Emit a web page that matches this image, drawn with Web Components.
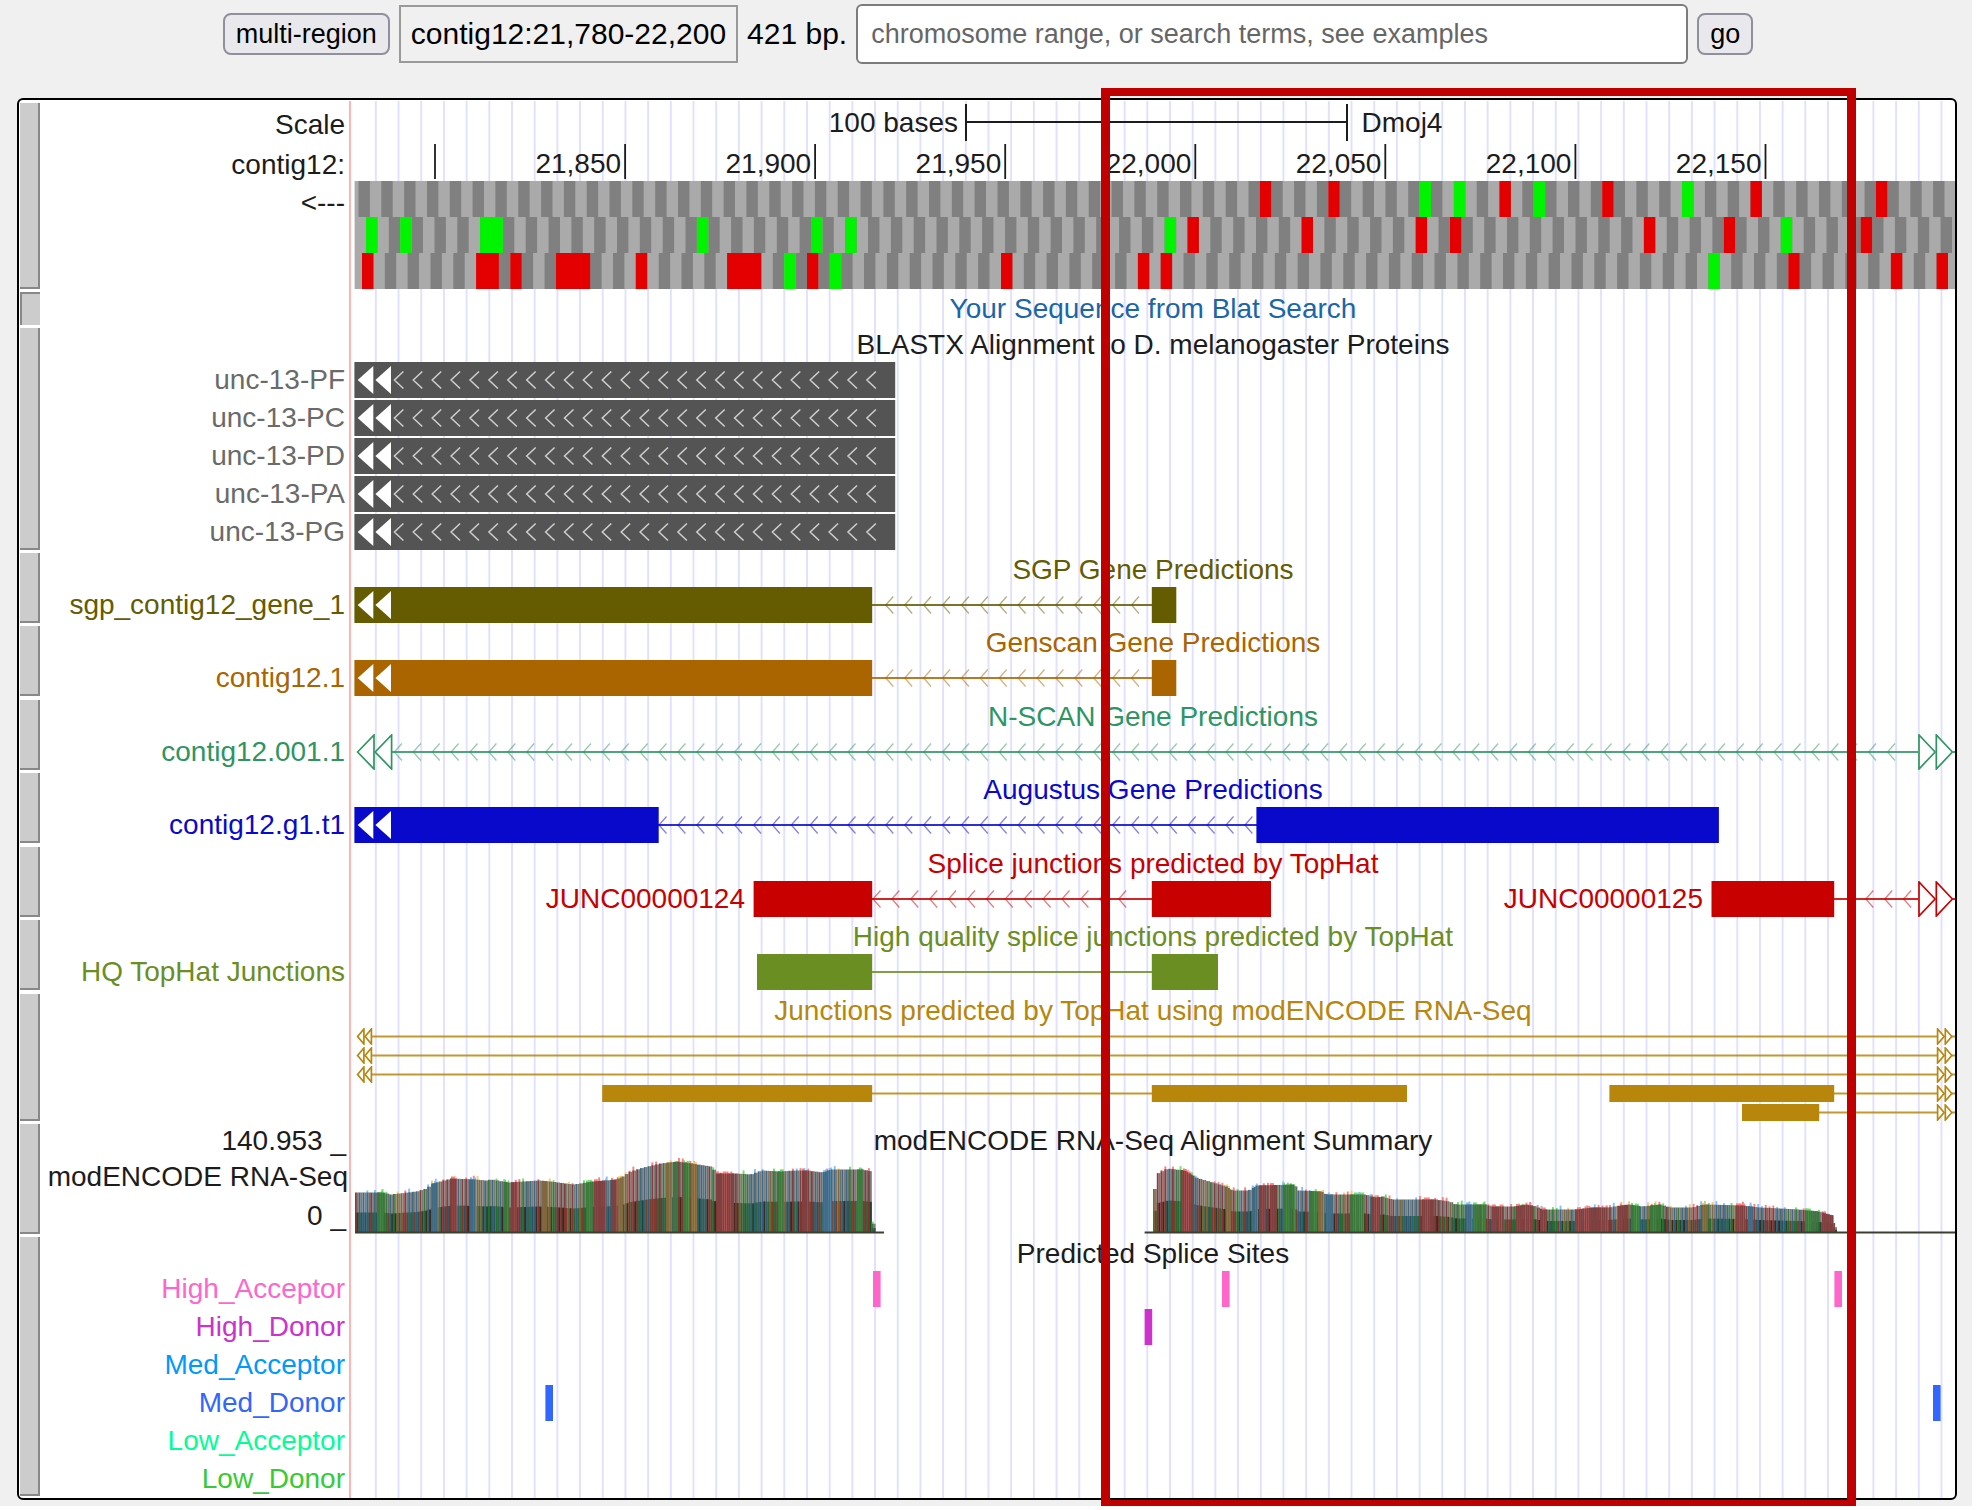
<!DOCTYPE html>
<html lang="en">
<head>
<meta charset="utf-8">
<title>Genome Browser - contig12:21,780-22,200</title>
<style>
  html { background: #fff; }
  body { margin: 0 4px 0 0; background: #f0f0f0; color: #1c1c1c; font-family: "Liberation Sans", Arial, sans-serif; font-size: 28px; display: flow-root; }
</style>
</head>
<body>
<position-bar range="contig12:21,780-22,200" size="421 bp."></position-bar>

<genome-view>
  <genome-track>
    <base-ruler></base-ruler>
  </genome-track>
  <genome-track heading="Your Sequence from Blat Search" style="color:#1a66a8" class="blat" pressed></genome-track>
  <genome-track heading="BLASTX Alignment to D. melanogaster Proteins">
    <track-lane label="unc-13-PF" class="protein" shapes="bar 354.4 895.2; cut 357; vee 394.4 867"></track-lane>
    <track-lane label="unc-13-PC" class="protein" shapes="bar 354.4 895.2; cut 357; vee 394.4 867"></track-lane>
    <track-lane label="unc-13-PD" class="protein" shapes="bar 354.4 895.2; cut 357; vee 394.4 867"></track-lane>
    <track-lane label="unc-13-PA" class="protein" shapes="bar 354.4 895.2; cut 357; vee 394.4 867"></track-lane>
    <track-lane label="unc-13-PG" class="protein" shapes="bar 354.4 895.2; cut 357; vee 394.4 867"></track-lane>
  </genome-track>
  <genome-track heading="SGP Gene Predictions" style="color:#655b00">
    <track-lane label="sgp_contig12_gene_1" shapes="bar 354.4 872.2; cut 357; line 872 1152; chev 885.8 1135; bar 1151.8 1176.3"></track-lane>
  </genome-track>
  <genome-track heading="Genscan Gene Predictions" style="color:#aa6400" class="tall">
    <track-lane label="contig12.1" shapes="bar 354.4 872.2; cut 357; line 872 1152; chev 885.8 1135; bar 1151.8 1176.3"></track-lane>
  </genome-track>
  <genome-track heading="N-SCAN Gene Predictions" style="color:#2e9562">
    <track-lane label="contig12.001.1" shapes="open-left 357; line 392 1918; chev 394.4 1906; open-right 1918.4; line 1953 1955"></track-lane>
  </genome-track>
  <genome-track heading="Augustus Gene Predictions" style="color:#0909cc" class="tall">
    <track-lane label="contig12.g1.t1" shapes="bar 354.4 658.7; cut 357; line 658 1257; chev 659 1246; bar 1256.4 1718.9"></track-lane>
  </genome-track>
  <genome-track heading="Splice junctions predicted by TopHat" style="color:#c80000">
    <track-lane shapes="bar 753.6 872.2; line 872 1152; chev 873 1135; bar 1151.8 1271; bar 1711.5 1834.2; line 1834 1918; chev 1865.8 1905; open-right 1918.4; line 1953 1955">
      <axis-text end="745">JUNC00000124</axis-text>
      <axis-text end="1703">JUNC00000125</axis-text>
    </track-lane>
  </genome-track>
  <genome-track heading="High quality splice junctions predicted by TopHat" style="color:#6b8e23" class="tall">
    <track-lane label="HQ TopHat Junctions" shapes="bar 757 872.2; line 872 1152; bar 1151.8 1218"></track-lane>
  </genome-track>
  <genome-track heading="Junctions predicted by TopHat using modENCODE RNA-Seq" style="color:#b8860b">
    <track-lane dense shapes="open-left 357; line 372 1937; open-right 1937; line 1952 1955"></track-lane>
    <track-lane dense shapes="open-left 357; line 372 1937; open-right 1937; line 1952 1955"></track-lane>
    <track-lane dense shapes="open-left 357; line 372 1937; open-right 1937; line 1952 1955"></track-lane>
    <track-lane dense shapes="bar 602.2 872.2; line 872 1152; bar 1151.8 1407; bar 1609.4 1834.2; line 1834 1937; open-right 1937; line 1952 1955"></track-lane>
    <track-lane dense shapes="bar 1742 1819.2; line 1819 1937; open-right 1937; line 1952 1955"></track-lane>
  </genome-track>
  <genome-track>
    <coverage-plot heading="modENCODE RNA-Seq Alignment Summary" label="modENCODE RNA-Seq" max="140.953" min="0"></coverage-plot>
  </genome-track>
  <genome-track heading="Predicted Splice Sites" class="sites">
    <track-lane label="High_Acceptor" style="color:#ff66cc" shapes="bar 873 880.6; bar 1222 1229.6; bar 1834.4 1842"></track-lane>
    <track-lane label="High_Donor" style="color:#cc33cc" shapes="bar 1144.6 1152.2"></track-lane>
    <track-lane label="Med_Acceptor" style="color:#0099ff"></track-lane>
    <track-lane label="Med_Donor" style="color:#3366ff" shapes="bar 545.4 553; bar 1933 1940.6"></track-lane>
    <track-lane label="Low_Acceptor" style="color:#00ff99"></track-lane>
    <track-lane label="Low_Donor" style="color:#33cc33"></track-lane>
  </genome-track>
</genome-view>

<script>
/* The image axis: data runs from X0 to X0 + SPAN; every drawing shares it. */
const X0 = 351, SPAN = 1604;
const pct = x => ((x - X0) / SPAN * 100).toFixed(3) + '%';
const axisSvg = (height, body) =>
  `<svg viewBox="${X0} 0 ${SPAN} ${height}" height="${height}" preserveAspectRatio="none" aria-hidden="true">${body}</svg>`;

customElements.define('position-bar', class extends HTMLElement {
  connectedCallback() {
    this.attachShadow({ mode: 'open' }).innerHTML = `
      <style>
        :host { display: block; }
        form { display: flex; justify-content: center; align-items: center; gap: 9px; height: 60px; padding: 4px 12px 34px 16px; color: #000; font-size: 30px; }
        button { box-sizing: border-box; height: 42px; padding: 0 11px; border: 2px solid #8f8f9d; border-radius: 8px; background: #e9e9ed; color: #000; font: 27px "Liberation Sans", Arial, sans-serif; }
        output { box-sizing: border-box; height: 58px; padding: 0 10px; border: 2px solid #999; line-height: 54px; white-space: nowrap; }
        .size { white-space: nowrap; }
        input { box-sizing: border-box; flex: 0 1 832px; min-width: 0; height: 60px; padding: 0 13px; border: 2px solid #7c7c7c; border-radius: 6px; background: #fff; font: 27px "Liberation Sans", Arial, sans-serif; }
        input::placeholder { color: #666; opacity: 1; }
      </style>
      <form onsubmit="return false">
        <button type="button">multi-region</button>
        <output>${this.getAttribute('range')}</output>
        <span class="size">${this.getAttribute('size')}</span>
        <input type="text" aria-label="Position or search terms" placeholder="chromosome range, or search terms, see examples">
        <button type="submit">go</button>
      </form>`;
  }
});

customElements.define('genome-view', class extends HTMLElement {
  connectedCallback() {
    let lines = '';
    for (let x = 374.9; x < X0 + SPAN; x += 22.69) lines += `<rect x="${x.toFixed(2)}" width="1.9" height="10" fill="#e0e0ff"/>`;
    this.attachShadow({ mode: 'open' }).innerHTML = `
      <style>
        :host { display: block; position: relative; margin: 0 15px 6px 17px; border: 2px solid #000; border-radius: 6px; background: #fff; padding: 2px 0 0 1px; }
        .guides { position: absolute; inset: 1px 0 0 330px; border-left: 2px solid #ffb4b4; }
        .guides svg { display: block; width: 100%; height: 100%; }
        .tracks { position: relative; }
        .highlight { position: absolute; top: -12px; bottom: -10px; left: 55.9%; right: 5.1%; box-sizing: border-box; border: solid #c00000; border-width: 8px 9px; pointer-events: none; }
      </style>
      <div class="guides"><svg viewBox="${X0} 0 ${SPAN} 10" preserveAspectRatio="none" aria-hidden="true">${lines}</svg></div>
      <div class="tracks"><slot></slot></div>
      <div class="highlight"></div>`;
  }
});

customElements.define('genome-track', class extends HTMLElement {
  connectedCallback() {
    const heading = this.getAttribute('heading');
    this.attachShadow({ mode: 'open' }).innerHTML = `
      <style>
        :host { display: flex; }
        :host(.tall) { padding-bottom: 1px; }
        :host(.blat) { height: 36px; }
        :host(.sites) { height: 262px; }
        button { flex: none; width: 20px; margin: 1px 0 2px; padding: 0; border: solid #888; border-width: 0 2px 2px 0; background: #ccc; }
        :host([pressed]) button { border-width: 2px 0 0 2px; }
        .body { flex: 1; min-width: 0; }
        h2 { margin: 0 0 0 311px; font: 28px/35px "Liberation Sans", Arial, sans-serif; text-align: center; white-space: nowrap; }
      </style>
      <button type="button" aria-label="Configure track"></button>
      <div class="body">${heading ? `<h2>${heading}</h2>` : ''}<slot></slot></div>`;
  }
});

/* Text whose right edge sits at an axis position. */
customElements.define('axis-text', class extends HTMLElement {
  connectedCallback() {
    this.attachShadow({ mode: 'open' }).innerHTML = `
      <style>:host { display: block; grid-area: 1 / 1; width: ${pct(+this.getAttribute('end'))}; text-align: right; white-space: nowrap; }</style><slot></slot>`;
  }
});

const shapeMakers = {
  bar: (h, a, b) => `<rect x="${a}" width="${(b - a).toFixed(1)}" height="${h}" fill="currentColor"/>`,
  line: (h, a, b) => `<rect x="${a}" y="${h / 2 - 1}" width="${b - a}" height="2" fill="currentColor" opacity=".85"/>`,
  cut: (h, a) => [a + .7, a + 18.4].map(x => `<path d="M${x} 18L${x + 15.6} 4V32Z" fill="#fff"/>`).join(''),
  vee: (h, a, b) => {
    let d = '';
    for (let x = a; x <= b; x += 18.9) d += `M${(x + 9).toFixed(1)} 9.5L${x.toFixed(1)} 18L${(x + 9).toFixed(1)} 26.5`;
    return `<path d="${d}" fill="none" stroke="#d0d0d0" stroke-width="1.5"/>`;
  },
  chev: (h, a, b) => {
    let d = '';
    for (let x = a; x <= b; x += 18.9) d += `M${(x + 7.5).toFixed(1)} 9.5L${x.toFixed(1)} 18L${(x + 7.5).toFixed(1)} 26.5`;
    return `<path d="${d}" fill="none" stroke="currentColor" stroke-width="1.3" opacity=".5"/>`;
  },
  'open-left': (h, a) => {
    const w = h > 20 ? 17.6 : 7.5, m = h / 2;
    return [a, a + w].map(x => `<path d="M${x + .6} ${m}L${x + w - .6} 1V${h - 1}Z" fill="#fff" stroke="currentColor" stroke-width="1.7"/>`).join('');
  },
  'open-right': (h, a) => {
    const w = h > 20 ? 17.3 : 7.7, m = h / 2;
    return [a, a + w].map(x => `<path d="M${x + w - .6} ${m}L${x + .6} 1V${h - 1}Z" fill="#fff" stroke="currentColor" stroke-width="1.7"/>`).join('');
  }
};

customElements.define('track-lane', class extends HTMLElement {
  connectedCallback() {
    const h = this.hasAttribute('dense') ? 17 : 36;
    const drawing = (this.getAttribute('shapes') || '').split(';').filter(s => s.trim()).map(s => {
      const [kind, ...n] = s.trim().split(' ');
      return shapeMakers[kind](h, ...n.map(Number));
    }).join('');
    this.attachShadow({ mode: 'open' }).innerHTML = `
      <style>
        :host { display: grid; grid-template-columns: 305px 1fr; column-gap: 6px; height: ${h + 2}px; line-height: 36px; }
        .label { text-align: right; white-space: nowrap; }
        .data { display: grid; align-items: start; }
        svg { display: block; grid-area: 1 / 1; width: 100%; }
        :host(.protein) .label { color: #6a6a6a; }
        :host(.protein) svg { color: #545454; }
      </style>
      <div class="label">${this.getAttribute('label') || ''}</div>
      <div class="data">${axisSvg(h, drawing)}<slot></slot></div>`;
  }
});

customElements.define('base-ruler', class extends HTMLElement {
  connectedCallback() {
    const codon = 11.41, end = X0 + SPAN;
    /* codon index, run length, kind: s = stop, m = start */
    const frames = [
      [358.5, '79s 85s 93m 96m 100s 103m 109s 116m 122s 133s'],
      [366, '0m 3m 10m2 29m 39m 42m 70m 72s 82s 92s 95s 112s 119s 124m 131s'],
      [362, '0s 10s2 13s 17s3 24s 32s3 37m 39s 41m 56s 68s 70s 118m 125s 134s 138s']
    ];
    let codons = '';
    frames.forEach(([o, marks], row) => {
      const y = row * 36;
      codons += `<rect x="354.6" y="${y}" width="${end - 354.6}" height="36" fill="#aaa"/>`;
      for (let x = o; x < end; x += codon * 2) codons += `<rect x="${x.toFixed(1)}" y="${y}" width="${Math.min(codon, end - x).toFixed(1)}" height="36" fill="#808080"/>`;
      for (const m of marks.split(' ')) {
        const [, k, t, n] = m.match(/(\d+)([sm])(\d*)/);
        codons += `<rect x="${(o + k * codon).toFixed(1)}" y="${y}" width="${(codon * (n || 1)).toFixed(1)}" height="36" fill="${t === 's' ? '#e40000' : '#00f400'}"/>`;
      }
    });
    let ticks = '', names = '';
    ['', '21,850', '21,900', '21,950', '22,000', '22,050', '22,100', '22,150'].forEach((t, i) => {
      const x = 435 + i * 190.07;
      ticks += `<rect x="${(x - .9).toFixed(1)}" y="2" width="1.8" height="35"/>`;
      if (t) names += `<axis-text end="${x - 4}">${t}</axis-text>`;
    });
    this.attachShadow({ mode: 'open' }).innerHTML = `
      <style>
        :host { display: grid; grid-template-columns: 305px 1fr; column-gap: 6px; height: 189px; }
        .labels { padding-top: 3px; text-align: right; line-height: 40px; }
        .labels .strand { line-height: 36px; }
        .scale, .ticks { display: grid; line-height: 42px; }
        .scale { height: 40px; }
        .ticks { height: 39px; line-height: 44px; }
        svg { display: block; grid-area: 1 / 1; width: 100%; fill: #1c1c1c; }
        .assembly { grid-area: 1 / 1; padding-left: 63%; }
      </style>
      <div class="labels"><div>Scale</div><div>contig12:</div><div class="strand">&lt;---</div></div>
      <div>
        <div class="scale">${axisSvg(40, '<path d="M965 2h2v17h379v-17h2v37h-2v-18h-379v18h-2z"/>')}<axis-text end="958">100 bases</axis-text><div class="assembly">Dmoj4</div></div>
        <div class="ticks">${axisSvg(39, ticks)}${names}</div>
        ${axisSvg(108, codons)}
      </div>`;
  }
});

customElements.define('coverage-plot', class extends HTMLElement {
  connectedCallback() {
    const floor = 109.5;
    /* [position, height] profiles with the homopolymer runs that show as solid blocks */
    const peaks = [
      { from: 355, step: 3.8,
        top: [[355,40],[382,40],[390,38],[416,41],[426,44],[432,49],[451,54],[475,53],[485,52],[491,53],[508,50],[538,52],[550,51],[573,48],[592,51],[616,53],[622,56],[630,61],[643,65],[660,69],[677,71],[691,69],[710,66],[717,59],[736,59],[750,58],[761,62],[780,61],[794,62],[807,62],[822,60],[830,63],[862,63],[871,61],[872,32],[873,3],[877,0]],
        runs: [[377,385,'g'],[432,438,'b'],[451,457,'r'],[470,476,'b'],[504,509,'g'],[511,517,'r'],[542,547,'t'],[586,593,'g'],[594,606,'r'],[611,617,'r'],[618,623,'t'],[666,672,'t'],[673,678,'g'],[683,690,'g'],[691,697,'t'],[717,734,'r'],[778,784,'g'],[802,809,'r'],[823,832,'b'],[857,863,'g']] },
      { from: 1153, step: 3.8,
        top: [[1153,29],[1155,58],[1167,64],[1184,62],[1195,55],[1212,50],[1226,46],[1231,42],[1248,42],[1256,47],[1293,48],[1298,42],[1321,41],[1326,38],[1365,38],[1374,35],[1382,36],[1391,33],[1435,33],[1449,31],[1455,28],[1485,28],[1491,26],[1513,26],[1525,28],[1536,26],[1541,23],[1575,23],[1592,25],[1608,25],[1620,27],[1628,28],[1642,26],[1659,28],[1670,25],[1692,25],[1703,28],[1742,27],[1759,25],[1798,23],[1818,21],[1832,17],[1835,1],[1836,0]],
        runs: [[1181,1194,'r'],[1226,1231,'t'],[1252,1258,'b'],[1259,1266,'r'],[1270,1277,'r'],[1283,1295,'g'],[1309,1317,'g'],[1318,1324,'t'],[1326,1333,'b'],[1350,1364,'g'],[1371,1380,'r'],[1422,1434,'r'],[1466,1472,'b'],[1473,1486,'g'],[1492,1504,'r'],[1516,1533,'r'],[1540,1547,'r'],[1575,1608,'r'],[1618,1628,'r'],[1631,1640,'g'],[1650,1661,'g'],[1702,1708,'t'],[1736,1745,'r'],[1748,1753,'b'],[1805,1818,'g'],[1822,1835,'r']] }
    ];
    const mid = { r: '#804040', g: '#3c773c', b: '#406a84', t: '#80693e' };
    const low = { r: '#80342c', g: '#236a2e', b: '#2a6070', t: '#74602c' };
    const cap = { r: '#ff8080', g: '#6be06b', b: '#80c4ff', t: '#ffc870' };
    let seed = 7;
    const rnd = () => (seed = (seed * 16807) % 2147483647) / 2147483647;
    let out = '';
    const put = (x, w, h, fill) => { if (h > 0) out += `<rect x="${x.toFixed(1)}" y="${(floor - h).toFixed(1)}" width="${w.toFixed(1)}" height="${h.toFixed(1)}" fill="${fill}"/>`; };
    for (const p of peaks) {
      const heightAt = x => {
        for (let i = 1; i < p.top.length; i++) {
          const [x1, h1] = p.top[i - 1], [x2, h2] = p.top[i];
          if (x <= x2) return h1 + (h2 - h1) * (x - x1) / (x2 - x1);
        }
        return 0;
      };
      const stop = p.top[p.top.length - 1][0];
      for (let x = p.from; x < stop; x += p.step) {
        const h = heightAt(x + 1), base = 'rgbt'[Math.floor(rnd() * 3.5)];
        if (rnd() < .45) put(x, 1.9, h + 1 + rnd() * 3, cap[base]);
        put(x, 1.9, h, mid[base]);
        put(x + 1.9, 1.9, h, rnd() < .7 ? '#7c7c7a' : '#6c706c');
        put(x, 1.9, h * .5, low[base]);
        put(x + 1.9, 1.9, h * .5, ['#3c2a22', '#24452c', '#7a3c30', '#2f5060', '#2c6438'][Math.floor(rnd() * 5)]);
      }
      for (const [a, b, base] of p.runs)
        for (let x = a; x < b; x += 1.9) {
          const w = Math.min(1.9, b - x) + .1, h = heightAt(x);
          if (rnd() < .5) put(x, w, h + 2, cap[base]);
          put(x, w, h, mid[base]);
        }
    }
    out += '<path d="M355 108.5H884V110.5H355ZM1144.6 108.5H1955V110.5H1144.6Z" fill="#3a4030"/>';
    this.attachShadow({ mode: 'open' }).innerHTML = `
      <style>
        :host { display: grid; grid-template-columns: 308px 1fr; column-gap: 3px; height: 113px; }
        .labels { text-align: right; line-height: 36px; white-space: nowrap; }
        .bound { padding-right: 2px; }
        .floor { line-height: 41px; }
        .plot { display: grid; align-items: start; }
        svg, h2 { grid-area: 1 / 1; }
        svg { display: block; width: 100%; }
        h2 { margin: 0; font: 28px/36px "Liberation Sans", Arial, sans-serif; text-align: center; white-space: nowrap; }
      </style>
      <div class="labels">
        <div class="bound">${this.getAttribute('max')} _</div>
        <div>${this.getAttribute('label')}</div>
        <div class="bound floor">${this.getAttribute('min')} _</div>
      </div>
      <div class="plot">${axisSvg(113, out)}<h2>${this.getAttribute('heading')}</h2></div>`;
  }
});
</script>
</body>
</html>
